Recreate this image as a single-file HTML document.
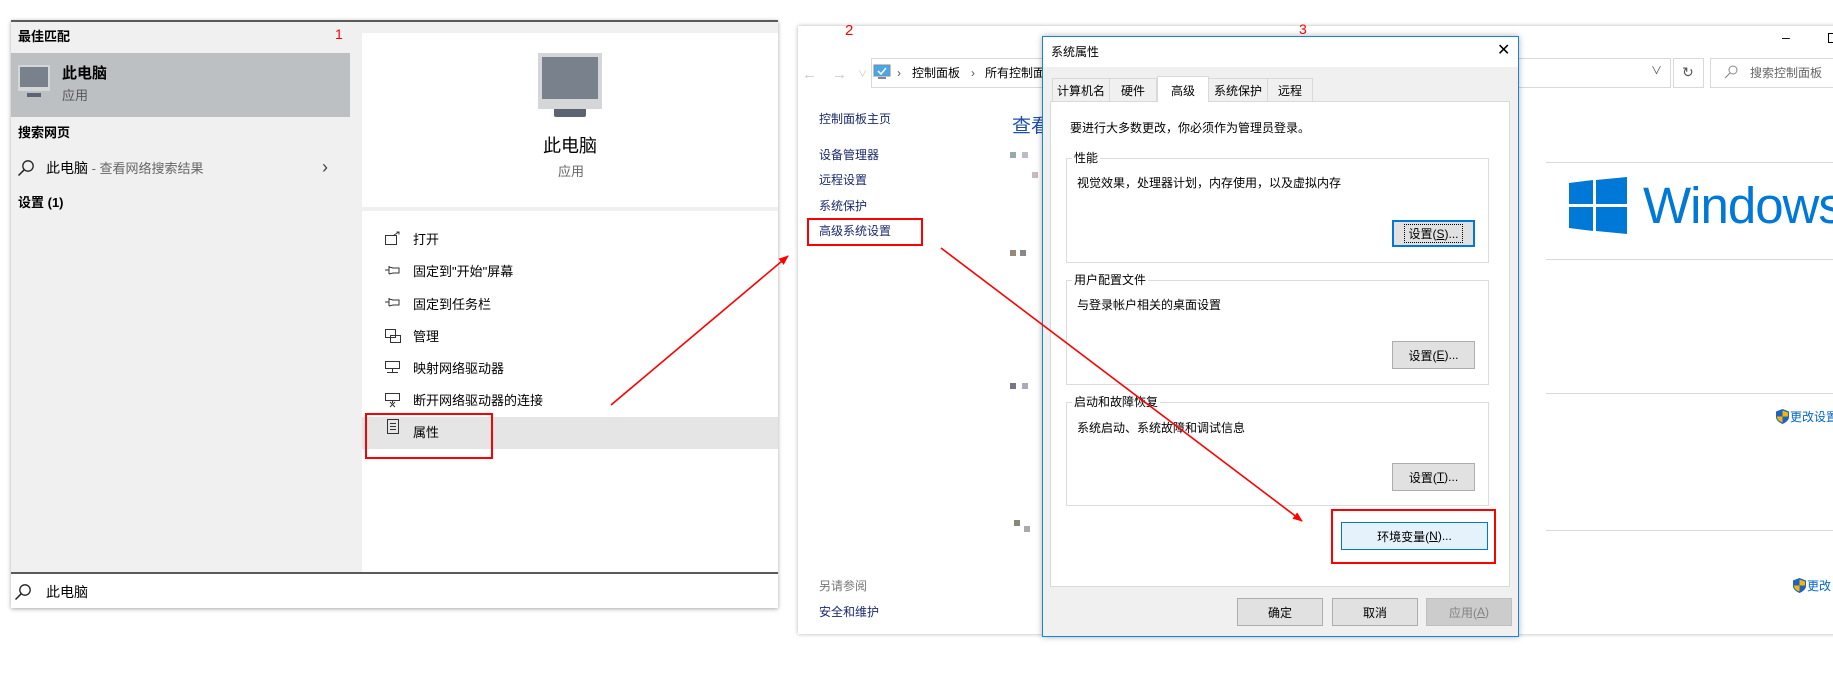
<!DOCTYPE html>
<html><head><meta charset="utf-8">
<style>
*{margin:0;padding:0;box-sizing:border-box}
body{width:1833px;height:694px;background:#fff;position:relative;overflow:hidden;font-family:"Liberation Sans","Noto Sans CJK SC",sans-serif;color:#000}
.a{position:absolute;white-space:nowrap;line-height:1}
.b{font-weight:bold}
.btn{position:absolute;background:#e1e1e1;border:1px solid #adadad;font-size:12px;display:flex;align-items:center;justify-content:center}
.grp{position:absolute;border:1px solid #dcdcdc}
.gl{position:absolute;background:#fff;font-size:12px;line-height:1;padding:0 2px}
.tab{position:absolute;top:78px;height:23px;background:#f0f0f0;border:1px solid #d9d9d9;border-bottom:none;font-size:12px;display:flex;align-items:center;justify-content:center}
.lk{position:absolute;font-size:12px;color:#1a2a6c;line-height:1;white-space:nowrap}
.hl{position:absolute;height:1px;background:#d9d9d9}
.px{position:absolute;width:6px;height:6px}
</style></head><body>

<!-- LEFT START PANEL -->
<div style="position:absolute;left:11px;top:20px;width:767px;height:588px;background:#f0f0f0;border-top:2px solid #5a5a5a;box-shadow:0 1px 4px rgba(0,0,0,.35)"></div>
<div style="position:absolute;left:11px;top:53px;width:339px;height:64px;background:#bdc0c3"></div>
<div style="position:absolute;left:362px;top:33px;width:416px;height:539px;background:#fff"></div>
<div style="position:absolute;left:362px;top:207px;width:416px;height:4px;background:#f0f0f0"></div>
<div style="position:absolute;left:362px;top:417px;width:416px;height:32px;background:#e5e5e5"></div>
<div style="position:absolute;left:11px;top:572px;width:767px;height:2px;background:#5a5a5a"></div>
<div style="position:absolute;left:11px;top:574px;width:767px;height:34px;background:#fff"></div>

<div class="a b" style="left:18px;top:30px;font-size:13px">最佳匹配</div>
<div class="a" style="left:335px;top:27px;font-size:14px;color:#f00">1</div>
<!-- small monitor -->
<div style="position:absolute;left:18px;top:65px;width:32px;height:26px;background:#d4d6d8"></div>
<div style="position:absolute;left:20px;top:67px;width:28px;height:20px;background:#78818c"></div>
<div style="position:absolute;left:27px;top:93px;width:14px;height:4px;background:#5b6470"></div>
<div class="a b" style="left:62px;top:66px;font-size:15px">此电脑</div>
<div class="a" style="left:62px;top:89px;font-size:13px;color:#555">应用</div>
<div class="a b" style="left:18px;top:126px;font-size:13px">搜索网页</div>
<svg style="position:absolute;left:17px;top:159px" width="18" height="18" viewBox="0 0 18 18"><circle cx="11" cy="7" r="5.2" fill="none" stroke="#222" stroke-width="1.3"/><line x1="7.3" y1="10.7" x2="1.5" y2="16.5" stroke="#222" stroke-width="1.5"/></svg>
<div class="a" style="left:46px;top:161px;font-size:14px">此电脑<span style="color:#666;font-size:13px"> - 查看网络搜索结果</span></div>
<div class="a" style="left:322px;top:158px;font-size:18px;color:#444">&#x203A;</div>
<div class="a b" style="left:18px;top:196px;font-size:13px">设置 (1)</div>

<!-- big monitor -->
<div style="position:absolute;left:538px;top:53px;width:64px;height:56px;background:#d4d6d8"></div>
<div style="position:absolute;left:542px;top:57px;width:56px;height:42px;background:#78818c"></div>
<div style="position:absolute;left:554px;top:109px;width:32px;height:8px;background:#5b6470;border-radius:0 0 2px 2px"></div>
<div class="a" style="left:543px;top:137px;font-size:18px">此电脑</div>
<div class="a" style="left:558px;top:165px;font-size:13px;color:#666">应用</div>

<!-- menu icons -->
<svg style="position:absolute;left:384px;top:231px" width="20" height="210" viewBox="0 0 20 210" fill="none" stroke="#333" stroke-width="1">
<rect x="1.5" y="4.5" width="11" height="9"/><path d="M10 4 L15 1 M12.5 1 H15 V3.5"/>
<path d="M1 39 H5 M5 35 V43 M5 36 L9 37 H15 V42 H9 L5 43"/>
<path d="M1 71 H5 M5 67 V75 M5 68 L9 69 H15 V74 H9 L5 75"/>
<rect x="1.5" y="98.5" width="10" height="8"/><rect x="6.5" y="104.5" width="10" height="7"/>
<rect x="1.5" y="130.5" width="14" height="7"/><path d="M8.5 137.5 V141 M3 141.5 H14"/>
<rect x="1.5" y="162.5" width="14" height="7"/><path d="M8.5 169.5 V172 M6 171 L11 176 M11 171 L6 176"/>
<rect x="3.5" y="188.5" width="11" height="14"/><path d="M6 192.5 H12 M6 195.5 H12 M6 198.5 H12"/>
</svg>
<div class="a" style="left:413px;top:233px;font-size:13px">打开</div>
<div class="a" style="left:413px;top:265px;font-size:13px">固定到"开始"屏幕</div>
<div class="a" style="left:413px;top:298px;font-size:13px">固定到任务栏</div>
<div class="a" style="left:413px;top:330px;font-size:13px">管理</div>
<div class="a" style="left:413px;top:362px;font-size:13px">映射网络驱动器</div>
<div class="a" style="left:413px;top:394px;font-size:13px">断开网络驱动器的连接</div>
<div class="a" style="left:413px;top:426px;font-size:13px">属性</div>
<div style="position:absolute;left:365px;top:413px;width:128px;height:46px;border:2px solid #f00"></div>
<svg style="position:absolute;left:14px;top:583px" width="18" height="18" viewBox="0 0 18 18"><circle cx="11" cy="7" r="5.2" fill="none" stroke="#222" stroke-width="1.3"/><line x1="7.3" y1="10.7" x2="1.5" y2="16.5" stroke="#222" stroke-width="1.5"/></svg>
<div class="a" style="left:46px;top:585px;font-size:14px">此电脑</div>

<!-- CONTROL PANEL WINDOW -->
<div style="position:absolute;left:798px;top:26px;width:1040px;height:608px;background:#fff;box-shadow:0 0 4px rgba(0,0,0,.3)"></div>
<div class="a" style="left:845px;top:23px;font-size:15px;color:#f00">2</div>
<div class="a" style="left:1782px;top:30px;font-size:14px">&#x2013;</div>
<div style="position:absolute;left:1828px;top:33px;width:10px;height:10px;border:1px solid #000"></div>
<div class="a" style="left:802px;top:67px;font-size:15px;color:#c8c8c8">&#x2190;</div>
<div class="a" style="left:832px;top:67px;font-size:15px;color:#c8c8c8">&#x2192;</div>
<div class="a" style="left:858px;top:70px;font-size:9px;color:#c8c8c8">&#x2228;</div>
<div style="position:absolute;left:871px;top:58px;width:800px;height:30px;border:1px solid #d9d9d9"></div>
<svg style="position:absolute;left:873px;top:64px" width="18" height="16"><rect x="1" y="1" width="16" height="11" fill="#4aa8e8" stroke="#7a8a9a"/><path d="M5 7 L8 10 L13 4" stroke="#fff" stroke-width="1.5" fill="none"/><rect x="5" y="13" width="8" height="2" fill="#7a8a9a"/></svg>
<div class="a" style="left:897px;top:67px;font-size:12px;color:#555">&#x203A;</div>
<div class="a" style="left:912px;top:67px;font-size:12px">控制面板</div>
<div class="a" style="left:971px;top:67px;font-size:12px;color:#555">&#x203A;</div>
<div class="a" style="left:985px;top:67px;font-size:12px">所有控制面板项</div>
<div class="a" style="left:1651px;top:66px;font-size:11px;color:#555">&#x2228;</div>
<div style="position:absolute;left:1673px;top:58px;width:31px;height:30px;border:1px solid #d9d9d9"></div>
<div class="a" style="left:1682px;top:65px;font-size:14px;color:#555">&#x21BB;</div>
<div style="position:absolute;left:1710px;top:58px;width:130px;height:30px;border:1px solid #d9d9d9"></div>
<svg style="position:absolute;left:1724px;top:65px" width="14" height="14"><circle cx="9" cy="5" r="4" fill="none" stroke="#888"/><line x1="6" y1="8" x2="1" y2="13" stroke="#888" stroke-width="1.2"/></svg>
<div class="a" style="left:1750px;top:67px;font-size:12px;color:#666">搜索控制面板</div>

<div class="lk" style="left:819px;top:113px">控制面板主页</div>
<div class="lk" style="left:819px;top:149px">设备管理器</div>
<div class="lk" style="left:819px;top:174px">远程设置</div>
<div class="lk" style="left:819px;top:200px">系统保护</div>
<div class="lk" style="left:819px;top:225px">高级系统设置</div>
<div style="position:absolute;left:807px;top:218px;width:116px;height:28px;border:2px solid #f00"></div>
<div class="a" style="left:1012px;top:117px;font-size:19px;color:#1e4fa8">查看有关计算机的基本信息</div>
<div class="px" style="left:1010px;top:152px;background:#9aa"></div><div class="px" style="left:1022px;top:152px;background:#bbc"></div>
<div class="px" style="left:1032px;top:172px;background:#cbb"></div>
<div class="px" style="left:1010px;top:250px;background:#987"></div><div class="px" style="left:1020px;top:250px;background:#888"></div>
<div class="px" style="left:1010px;top:383px;background:#778"></div><div class="px" style="left:1022px;top:383px;background:#aab"></div>
<div class="px" style="left:1014px;top:520px;background:#887"></div><div class="px" style="left:1024px;top:526px;background:#aaa"></div>
<div class="lk" style="left:819px;top:580px;color:#777">另请参阅</div>
<div class="lk" style="left:819px;top:606px">安全和维护</div>

<div class="hl" style="left:1546px;top:162px;width:290px"></div>
<div class="hl" style="left:1546px;top:259px;width:290px"></div>
<div class="hl" style="left:1546px;top:393px;width:290px"></div>
<div class="hl" style="left:1546px;top:530px;width:290px"></div>
<svg style="position:absolute;left:1569px;top:177px" width="58" height="58" viewBox="0 0 58 58" fill="#0078d7"><polygon points="0,6 24,3 24,27 0,27"/><polygon points="27,3 58,0 58,27 27,27"/><polygon points="0,30 24,30 24,54 0,51"/><polygon points="27,30 58,30 58,57 27,54"/></svg>
<div class="a" style="left:1643px;top:180px;font-size:51px;color:#0078d7;letter-spacing:-1px">Windows</div>
<svg style="position:absolute;left:1776px;top:409px" width="13" height="15" viewBox="0 0 13 15"><path d="M6.5 0 L13 2.5 V8 C13 11 10 13.5 6.5 15 C3 13.5 0 11 0 8 V2.5Z" fill="#1d62c4"/><path d="M6.5 1.5 V7.5 H12 V3.5Z M6.5 7.5 V13.5 C3.5 12.5 1 10.5 1 7.5Z" fill="#f2b800"/></svg>
<div class="a" style="left:1790px;top:411px;font-size:12px;color:#0066cc">更改设置</div>
<svg style="position:absolute;left:1793px;top:578px" width="13" height="15" viewBox="0 0 13 15"><path d="M6.5 0 L13 2.5 V8 C13 11 10 13.5 6.5 15 C3 13.5 0 11 0 8 V2.5Z" fill="#1d62c4"/><path d="M6.5 1.5 V7.5 H12 V3.5Z M6.5 7.5 V13.5 C3.5 12.5 1 10.5 1 7.5Z" fill="#f2b800"/></svg>
<div class="a" style="left:1807px;top:580px;font-size:12px;color:#0066cc">更改</div>

<!-- DIALOG -->
<div class="a" style="left:1299px;top:22px;font-size:14px;color:#f00">3</div>
<div style="position:absolute;left:1042px;top:36px;width:477px;height:601px;background:#f0f0f0;border:1px solid #1883d7;box-shadow:0 0 6px rgba(0,0,0,.3)"></div>
<div style="position:absolute;left:1043px;top:37px;width:475px;height:30px;background:#fff"></div>
<div class="a" style="left:1051px;top:46px;font-size:12px">系统属性</div>
<div class="a" style="left:1497px;top:43px;font-size:16px">&#x2715;</div>
<div style="position:absolute;left:1050px;top:101px;width:460px;height:486px;background:#fff;border:1px solid #d9d9d9"></div>
<div class="tab" style="left:1052px;width:58px">计算机名</div>
<div class="tab" style="left:1109px;width:48px">硬件</div>
<div class="tab" style="left:1208px;width:60px">系统保护</div>
<div class="tab" style="left:1267px;width:46px">远程</div>
<div class="tab" style="left:1157px;top:76px;height:26px;width:52px;background:#fff;align-items:flex-start;padding-top:5px">高级</div>
<div class="a" style="left:1070px;top:122px;font-size:12px">要进行大多数更改，你必须作为管理员登录。</div>

<div class="grp" style="left:1066px;top:158px;width:423px;height:105px"></div>
<div class="gl" style="left:1072px;top:152px">性能</div>
<div class="a" style="left:1077px;top:177px;font-size:12px">视觉效果，处理器计划，内存使用，以及虚拟内存</div>
<div class="btn" style="left:1392px;top:220px;width:83px;height:27px;border:2px solid #0078d7"><span style="border:1px dotted #000;padding:0 3px">设置(<u>S</u>)...</span></div>

<div class="grp" style="left:1066px;top:280px;width:423px;height:105px"></div>
<div class="gl" style="left:1072px;top:274px">用户配置文件</div>
<div class="a" style="left:1077px;top:299px;font-size:12px">与登录帐户相关的桌面设置</div>
<div class="btn" style="left:1392px;top:341px;width:83px;height:28px">设置(<u>E</u>)...</div>

<div class="grp" style="left:1066px;top:402px;width:423px;height:104px"></div>
<div class="gl" style="left:1072px;top:396px">启动和故障恢复</div>
<div class="a" style="left:1077px;top:422px;font-size:12px">系统启动、系统故障和调试信息</div>
<div class="btn" style="left:1392px;top:463px;width:83px;height:28px">设置(<u>T</u>)...</div>

<div class="btn" style="left:1341px;top:522px;width:147px;height:28px;background:#e5f1fb;border-color:#0078d7">环境变量(<u>N</u>)...</div>
<div style="position:absolute;left:1331px;top:509px;width:165px;height:55px;border:2px solid #f00"></div>

<div class="btn" style="left:1237px;top:598px;width:86px;height:28px">确定</div>
<div class="btn" style="left:1332px;top:598px;width:86px;height:28px">取消</div>
<div class="btn" style="left:1426px;top:598px;width:86px;height:28px;background:#ccc;border-color:#bfbfbf;color:#838383">应用(<u>A</u>)</div>

<!-- ARROWS -->
<svg style="position:absolute;left:0;top:0" width="1833" height="694">
<defs><marker id="m" markerWidth="10" markerHeight="8" refX="9" refY="4" orient="auto" markerUnits="userSpaceOnUse"><path d="M0,0 L10,4 L0,8Z" fill="#f00"/></marker></defs>
<line x1="611" y1="405" x2="788" y2="256" stroke="#f00" stroke-width="1.6" marker-end="url(#m)"/>
<line x1="941" y1="248" x2="1302" y2="521" stroke="#f00" stroke-width="1.6" marker-end="url(#m)"/>
</svg>
</body></html>
